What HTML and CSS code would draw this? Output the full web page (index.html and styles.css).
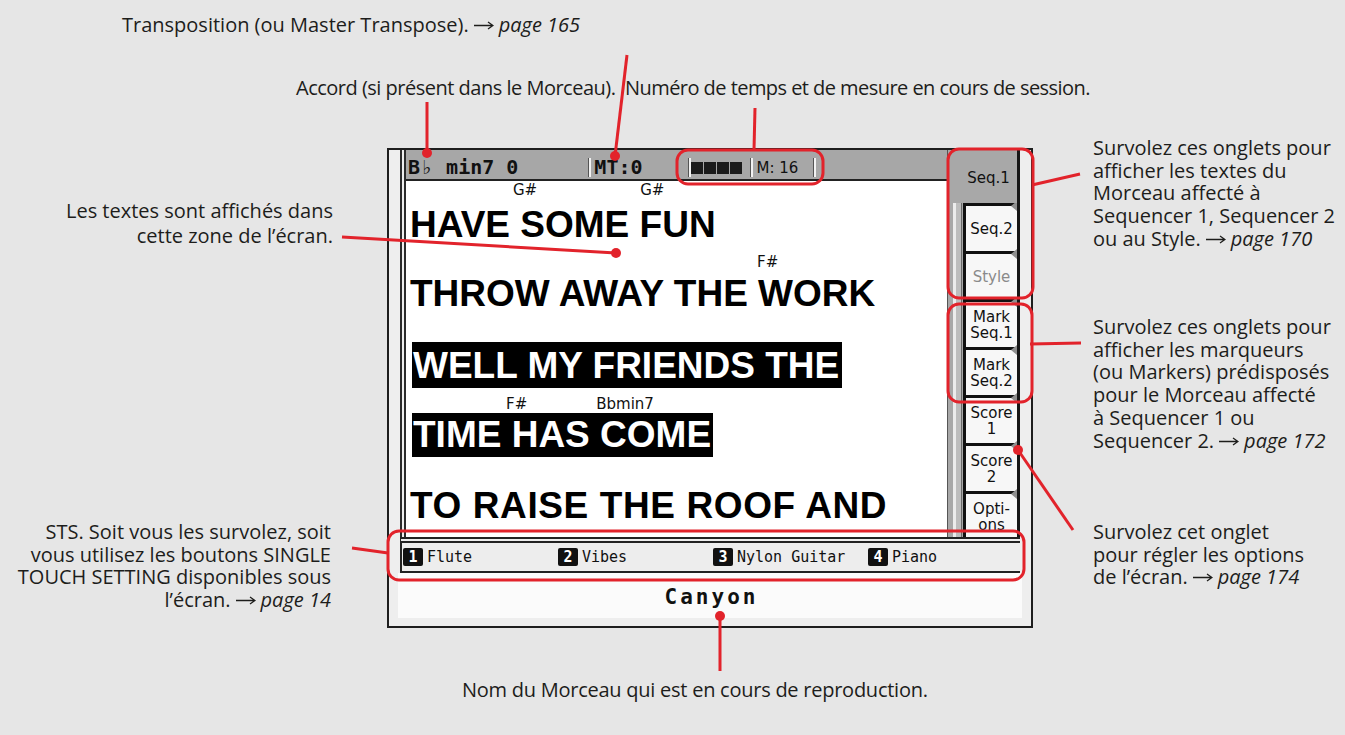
FILE: index.html
```html
<!DOCTYPE html>
<html lang="fr">
<head>
<meta charset="utf-8">
<title>Lyrics</title>
<link rel="stylesheet" href="styles.css">
</head>
<body>
<div class="canvas">
  <div class="screen">
    <div class="main">
      <div class="left">
        <div class="header">
          <span class="hd-chord">B<span class="flat">♭</span> min7 0</span>
          <span class="sep sep-mt"></span><span class="mt">MT:0</span>
          <span class="sep sep-c1"></span>
          <span class="beats"><i></i><i></i><i></i><i></i></span>
          <span class="sep sep-c2"></span>
          <span class="meas">M: 16</span>
          <span class="sep sep-c3"></span>
        </div>
        <div class="lyrics">
          <div class="chords r1"><span class="c1">G#</span><span class="c2">G#</span></div>
          <div class="line l1">HAVE SOME FUN</div>
          <div class="chords r2"><span class="c3">F#</span></div>
          <div class="line l2">THROW AWAY THE WORK</div>
          <div class="line l3"><span class="hl hl3">WELL MY FRIENDS THE</span></div>
          <div class="chords r4"><span class="c4">F#</span><span class="c5">Bbmin7</span></div>
          <div class="line l4"><span class="hl hl4">TIME HAS COME</span></div>
          <div class="line l5">TO RAISE THE ROOF AND</div>
        </div>
      </div>
      <div class="tabs">
        <div class="tab-sel">Seq.1</div>
        <div class="tablist">
          <div class="tab">Seq.2</div>
          <div class="tab dim">Style</div>
          <div class="tab">Mark<br>Seq.1</div>
          <div class="tab">Mark<br>Seq.2</div>
          <div class="tab">Score<br>1</div>
          <div class="tab">Score<br>2</div>
          <div class="tab">Opti-<br>ons</div>
        </div>
      </div>
    </div>
    <div class="tracks">
      <div class="trk"><span class="badge">1</span>Flute</div>
      <div class="trk"><span class="badge">2</span>Vibes</div>
      <div class="trk"><span class="badge">3</span>Nylon Guitar</div>
      <div class="trk"><span class="badge">4</span>Piano</div>
    </div>
    <div class="song">Canyon</div>
  </div>

  <div class="lbl t-transp">Transposition (ou Master Transpose).<svg class="arr" viewBox="0 0 20 10"><path d="M0 5.5H19M14 2L19 5.5L14 9"/></svg><i>page 165</i></div>
  <div class="lbl t-accord">Accord (si présent dans le Morceau).</div>
  <div class="lbl t-numero">Numéro de temps et de mesure en cours de session.</div>
  <div class="lbl t-textes">Les textes sont affichés dans<br>cette zone de l’écran.</div>
  <div class="lbl t-tabs1">Survolez ces onglets pour<br>afficher les textes du<br>Morceau affecté à<br>Sequencer 1, Sequencer 2<br>ou au Style.<svg class="arr" viewBox="0 0 20 10"><path d="M0 5.5H19M14 2L19 5.5L14 9"/></svg><i>page 170</i></div>
  <div class="lbl t-tabs2">Survolez ces onglets pour<br>afficher les marqueurs<br>(ou Markers) prédisposés<br>pour le Morceau affecté<br>à Sequencer 1 ou<br>Sequencer 2.<svg class="arr" viewBox="0 0 20 10"><path d="M0 5.5H19M14 2L19 5.5L14 9"/></svg><i>page 172</i></div>
  <div class="lbl t-opts">Survolez cet onglet<br>pour régler les options<br>de l’écran.<svg class="arr" viewBox="0 0 20 10"><path d="M0 5.5H19M14 2L19 5.5L14 9"/></svg><i>page 174</i></div>
  <div class="lbl t-sts">STS. Soit vous les survolez, soit<br>vous utilisez les boutons SINGLE<br>TOUCH SETTING disponibles sous<br>l’écran.<svg class="arr" viewBox="0 0 20 10"><path d="M0 5.5H19M14 2L19 5.5L14 9"/></svg><i>page 14</i></div>
  <div class="lbl t-nom">Nom du Morceau qui est en cours de reproduction.</div>

  <svg class="overlay" viewBox="0 0 1345 735">
    <g class="strokes">
      <rect x="677" y="150" width="146" height="34" rx="11"/>
      <rect x="948" y="149" width="85" height="149" rx="11"/>
      <rect x="948" y="304" width="84" height="98" rx="11"/>
      <rect x="388" y="531" width="636" height="49" rx="11"/>
      <line x1="627" y1="55" x2="615" y2="156"/>
      <line x1="427" y1="102" x2="427" y2="153"/>
      <line x1="755" y1="108" x2="754" y2="150"/>
      <line x1="342" y1="237" x2="616" y2="253"/>
      <line x1="1032" y1="185" x2="1080" y2="174"/>
      <line x1="1030" y1="344" x2="1081" y2="343"/>
      <line x1="1018" y1="450" x2="1073" y2="530"/>
      <line x1="352" y1="548" x2="388" y2="553"/>
      <line x1="720" y1="616" x2="720" y2="671"/>
    </g>
    <g class="dots">
      <circle cx="427" cy="153" r="5"/>
      <circle cx="615" cy="156" r="5"/>
      <circle cx="616" cy="253" r="5"/>
      <circle cx="1018" cy="450" r="5"/>
      <circle cx="720" cy="616" r="5"/>
    </g>
  </svg>
</div>
</body>
</html>
```

FILE: styles.css
```css
* { box-sizing: border-box; margin: 0; padding: 0; }
html, body { width: 1345px; height: 735px; overflow: hidden; }
body {
  background: #e6e6e6;
  font-family: "Open Sans", "Noto Sans", sans-serif;
  color: #1d1d1b;
}
.canvas {
  position: relative;
  width: 1345px;
  height: 735px;
  padding: 148px 0 0 387px;
}

/* ---------- screen ---------- */
.screen {
  width: 646px;
  height: 480px;
  border: 2px solid #1e1e1e;
  background: #eeeeee;
  padding: 0 11px 8px 11px;
  display: flex;
  flex-direction: column;
}
.main { display: flex; height: 387px; }
.left {
  flex: 1;
  display: flex;
  flex-direction: column;
  border-left: 6px double #2b2b2b;
  min-width: 0;
}
.header {
  height: 31px;
  flex: none;
  background: #a7a7a7;
  border-bottom: 2px solid #222;
  display: flex;
  align-items: flex-start;
  padding: 6px 0 0 2px;
  font-family: "DejaVu Sans Mono", monospace;
  font-weight: bold;
  font-size: 20px;
  line-height: 23px;
  color: #111;
  white-space: pre;
}
.hd-chord { display: inline-flex; }
.flat {
  display: inline-block;
  width: 14px;
  font-family: "DejaVu Sans", sans-serif;
  font-weight: bold;
  font-size: 19px;
  text-align: center;
}
.sep {
  display: inline-block;
  width: 3px;
  height: 19px;
  margin-top: 2px;
  background: #f2f2f2;
  border-left: 1px solid #555;
}
.sep-mt { margin-left: 70px; margin-right: 3px; }
.sep-c1 { margin-left: 45px; margin-right: 0; }
.sep-c2 { margin-left: 8px; margin-right: 4px; }
.sep-c3 { margin-left: 15px; }
.beats { display: flex; gap: 1px; padding-top: 6px; }
.beats i { display: block; width: 12px; height: 12px; background: #1a1a1a; }
.meas {
  font-family: "DejaVu Sans", sans-serif;
  font-weight: normal;
  font-size: 15px;
  padding-top: 1px;
}

.lyrics {
  flex: 1;
  background: #ffffff;
  padding-left: 4px;
  overflow: hidden;
}
.chords {
  display: flex;
  font-family: "DejaVu Sans", sans-serif;
  font-size: 15px;
  line-height: 18px;
  color: #111;
  white-space: nowrap;
}
.r1 { height: 20px; }
.r2 { height: 24px; padding-top: 4px; }
.r4 { height: 25px; padding-top: 7px; }
.c1 { margin-left: 103px; }
.c2 { margin-left: 103px; }
.c3 { margin-left: 347px; }
.c4 { margin-left: 96px; }
.c5 { margin-left: 69px; }

.line {
  font-family: "Liberation Sans", Arial, sans-serif;
  font-weight: bold;
  font-size: 37px;
  color: #000;
  white-space: nowrap;
}
.l1 { line-height: 48px; }
.l2 { line-height: 41px; }
.l3 { display: flex; margin-top: 28px; }
.l4 { display: flex; }
.l5 { line-height: 41px; margin-top: 28px; letter-spacing: 0.6px; }
.hl { background: #000; color: #fff; margin-left: 2px; line-height: 42px; }
.hl3 { padding: 3px 3px 1px 1px; }
.hl4 { padding: 1px 2px 1px 1px; }

/* tabs */
.tabs {
  width: 73px;
  flex: none;
  background: #a8a8a8;
  border-left: 1px solid #555;
  border-right: 3px solid #161616;
  display: flex;
  flex-direction: column;
}
.tab-sel {
  height: 53px;
  flex: none;
  padding-top: 20px;
  text-align: center;
  padding-left: 12px;
  font-family: "DejaVu Sans", sans-serif;
  font-size: 15px;
  line-height: 16px;
  color: #111;
}
.tablist {
  flex: 1;
  overflow: hidden;
  padding-left: 15px;
  background: linear-gradient(to right, #a8a8a8 0 5px, #ececec 5px 8px, #bdbdbd 8px 13px, #6a6a6a 13px 14px, #a8a8a8 14px);
}
.tab {
  position: relative;
  height: 48px;
  border-left: 3px solid #111;
  border-top: 3px solid #111;
  background: #f7f7f7;
  display: flex;
  align-items: center;
  justify-content: center;
  text-align: center;
  font-family: "DejaVu Sans", sans-serif;
  font-size: 15px;
  line-height: 16px;
  color: #111;
}
.tab::after {
  content: "";
  position: absolute;
  right: 0;
  top: -5px;
  width: 6px;
  height: 10px;
  background: #8f8f8f;
  clip-path: polygon(100% 0, 0 50%, 100% 100%);
}
.tab.dim { color: #8a8a8a; }

/* tracks */
.tracks {
  height: 36px;
  flex: none;
  border-top: 6px double #222;
  border-bottom: 2px solid #222;
  border-left: 2px solid #222;
  background: #ededed;
  display: grid;
  grid-template-columns: repeat(4, 155px);
  align-items: center;
  padding-left: 1px;
  font-family: "DejaVu Sans Mono", monospace;
  font-size: 15px;
  color: #111;
}
.trk { display: flex; align-items: center; gap: 4px; white-space: nowrap; }
.badge {
  width: 20px;
  height: 18px;
  background: #111;
  color: #fff;
  font-weight: bold;
  border-radius: 2px;
  display: flex;
  align-items: center;
  justify-content: center;
}

.song {
  height: 45px;
  flex: none;
  margin: 0 -2px;
  background: #fbfbfb;
  display: flex;
  align-items: center;
  justify-content: center;
  padding: 2px 0 0 3px;
  font-family: "DejaVu Sans Mono", monospace;
  font-weight: bold;
  font-size: 21px;
  letter-spacing: 3px;
  color: #111;
}

/* ---------- labels ---------- */
.lbl {
  position: absolute;
  font-size: 20px;
  line-height: 22.7px;
  white-space: nowrap;
}
.lbl i { font-style: italic; }
.arr {
  display: inline-block;
  width: 20px;
  height: 10px;
  margin: 0 5px 0 5px;
  vertical-align: 2px;
  fill: none;
  stroke: #1d1d1b;
  stroke-width: 1.3;
}
.t-transp { left: 122px; top: 14px; }
.t-accord { left: 296px; top: 77px; letter-spacing: -0.5px; }
.t-numero { left: 625px; top: 77px; letter-spacing: -0.55px; }
.t-textes { right: 1012px; top: 198px; text-align: right; line-height: 25px; }
.t-tabs1 { left: 1093px; top: 137px; }
.t-tabs2 { left: 1093px; top: 316px; }
.t-opts { left: 1093px; top: 521px; }
.t-sts { right: 1014px; top: 521px; text-align: right; }
.t-nom { left: 462px; top: 679px; letter-spacing: -0.25px; }

/* ---------- overlay ---------- */
.overlay {
  position: absolute;
  left: 0;
  top: 0;
  width: 1345px;
  height: 735px;
  pointer-events: none;
}
.strokes { fill: none; stroke: #e2232b; stroke-width: 3; }
.dots { fill: #e2232b; }
```
